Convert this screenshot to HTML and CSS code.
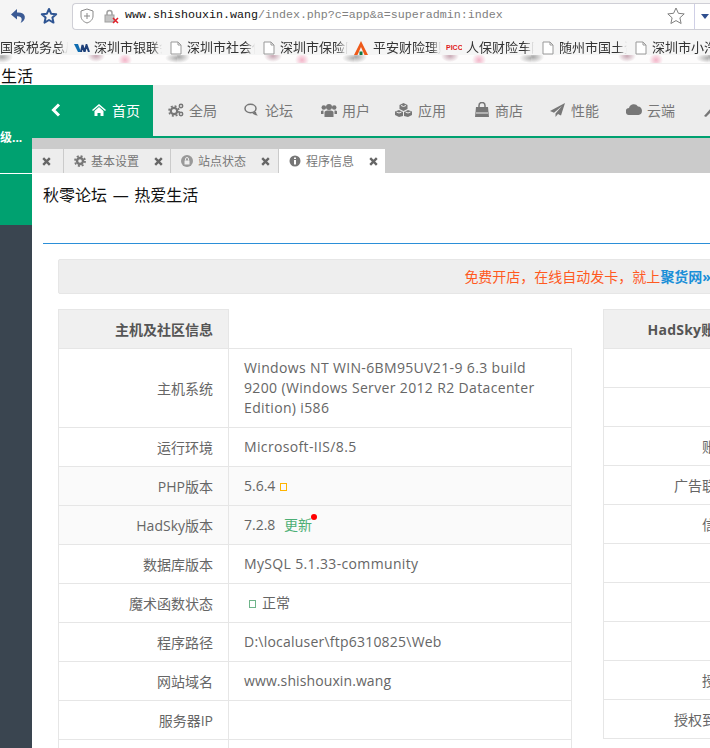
FILE: index.html
```html
<!DOCTYPE html>
<html lang="zh">
<head>
<meta charset="utf-8">
<title>HadSky</title>
<link rel="stylesheet" href="styles.css">
</head>
<body>
<div class="chrome">
  <div class="toolbar">
    <svg class="tb-icon back" viewBox="0 0 16 16" width="16" height="16"><path d="M7 1 1 6.500 7 11.500V8.200c2.700-.2 4.300.8 4.600 2.600.2 1.300-.2 2.800-1.100 4.200 3-1.500 4.700-3.800 4.300-6.600C14.300 5.300 11.300 4.200 7 4.500Z" fill="#3b5a94"/></svg>
    <svg class="tb-icon star" viewBox="0 0 18 18" width="18" height="18"><path d="M9 2l2.100 4.700 5.100.5-3.800 3.400 1.100 5L9 13l-4.500 2.600 1.100-5L1.800 7.200l5.100-.5Z" fill="none" stroke="#2f5593" stroke-width="2" stroke-linejoin="round"/></svg>
    <div class="address">
      <svg class="shield" viewBox="0 0 14 16" width="14" height="16"><path d="M7 1 1 3v5c0 3.500 2.500 5.800 6 7 3.500-1.200 6-3.500 6-7V3Z" fill="#fff" stroke="#8a8a8a"/><path d="M7 5v6M4 8h6" stroke="#8a8a8a"/></svg>
      <svg class="lock" viewBox="0 0 15 15" width="15" height="15"><rect x="1" y="6" width="9" height="7" fill="#c4c4c4" stroke="#a0a0a0"/><path d="M3 6V4a2.500 2.500 0 0 1 5 0v2" fill="none" stroke="#a0a0a0" stroke-width="1.500"/><path d="M9 9l5 5M14 9l-5 5" stroke="#e0202a" stroke-width="1.500"/></svg>
      <div class="url"><span class="url-host">www.shishouxin.wang</span>/index.php?c=app&amp;a=superadmin:index</div>
      <svg class="url-star" viewBox="0 0 20 20" width="20" height="20"><path d="M10 2l2.400 5.300 5.800.6-4.300 3.900 1.200 5.700L10 14.600l-5.100 2.900 1.200-5.700L1.800 7.900l5.800-.6Z" fill="#fff" stroke="#808080" stroke-linejoin="round"/></svg>
      <div class="url-drop"><i class="caret"></i></div>
    </div>
  </div>
  <div class="bookmarks">
    <span class="bm bm-1"><span class="bm-text">国家税务总局</span></span>
    <span class="bm bm-2"><svg class="bm-ic wide" viewBox="0 0 16 8" width="16" height="8"><path d="M0 0h4l3 8H4Z" fill="#0f6cb0"/><path d="M7 8l1.500-7 2 7 2-7L15 8" fill="none" stroke="#1d3f78" stroke-width="2"/></svg><span class="bm-text">深圳市银联会</span></span>
    <span class="bm bm-3"><svg class="bm-ic" viewBox="0 0 12 14" width="12" height="14"><path d="M1 1h7l3 3v9H1Z" fill="#fff" stroke="#999"/><path d="M8 1v3h3" fill="none" stroke="#999"/></svg><span class="bm-text">深圳市社会保</span></span>
    <span class="bm bm-4"><svg class="bm-ic" viewBox="0 0 12 14" width="12" height="14"><path d="M1 1h7l3 3v9H1Z" fill="#fff" stroke="#999"/><path d="M8 1v3h3" fill="none" stroke="#999"/></svg><span class="bm-text">深圳市保险同</span></span>
    <span class="bm bm-5"><svg class="bm-ic logo" viewBox="0 0 14 14" width="14" height="14"><path d="M7 0 0 14h3.500L7 6l3.500 8H14Z" fill="#ee5a1a"/><rect x="5.500" y="10.500" width="3" height="3.500" fill="#0f7a45"/></svg><span class="bm-text">平安财险理赔</span></span>
    <span class="bm bm-6"><span class="picc">PICC</span><span class="bm-text">人保财险车险</span></span>
    <span class="bm bm-7"><svg class="bm-ic" viewBox="0 0 12 14" width="12" height="14"><path d="M1 1h7l3 3v9H1Z" fill="#fff" stroke="#999"/><path d="M8 1v3h3" fill="none" stroke="#999"/></svg><span class="bm-text">随州市国土资</span></span>
    <span class="bm bm-8"><svg class="bm-ic" viewBox="0 0 12 14" width="12" height="14"><path d="M1 1h7l3 3v9H1Z" fill="#fff" stroke="#999"/><path d="M8 1v3h3" fill="none" stroke="#999"/></svg><span class="bm-text">深圳市小汽车</span></span>
  </div>
  <div class="floral"></div>
</div>
<div class="slogan">生活</div>
<div class="app">
  <aside class="side">
    <div class="side-green">
      <div class="side-top"><span class="side-label">级...</span></div>
    </div>
  </aside>
  <main class="main">
    <nav class="nav">
      <div class="nav-back"><svg viewBox="0 0 10 14" width="10" height="14"><path d="M8 1.500 2.500 7 8 12.500" fill="none" stroke="#fff" stroke-width="3"/></svg></div>
      <a class="nav-item active"><svg viewBox="0 0 14 12" width="14" height="12"><path d="M7 0 0 6l1 1 6-5 6 5 1-1ZM2.500 7v5h3V9h3v3h3V7L7 3Z" fill="#fff"/></svg>首页</a>
      <a class="nav-item i-2"><svg viewBox="0 0 16 14" width="16" height="14"><circle cx="6" cy="8" r="3.200" fill="none" stroke="#777" stroke-width="2.200"/><circle cx="6" cy="8" r="5" fill="none" stroke="#777" stroke-width="1.600" stroke-dasharray="2 1.930"/><circle cx="13" cy="3" r="1.700" fill="none" stroke="#777" stroke-width="1.500"/><circle cx="13" cy="11" r="1.700" fill="none" stroke="#777" stroke-width="1.500"/></svg>全局</a>
      <a class="nav-item i-3"><svg viewBox="0 0 15 13" width="15" height="13"><ellipse cx="6.500" cy="5.500" rx="5.500" ry="4.200" fill="none" stroke="#777" stroke-width="1.500"/><path d="M8 9.500c1 1.800 3 2.800 6 3-1.200-.9-1.800-2-2-3.800Z" fill="#777"/></svg>论坛</a>
      <a class="nav-item i-4"><svg viewBox="0 0 16 14" width="16" height="14"><circle cx="8" cy="4" r="3" fill="#777"/><circle cx="2.800" cy="4.500" r="2.300" fill="#777"/><circle cx="13.200" cy="4.500" r="2.300" fill="#777"/><path d="M3.500 14V9.500C3.500 8 5 7.500 8 7.500s4.500.5 4.500 2V14ZM0 11V8.500C0 7.800 1 7.500 2.500 7.500V11ZM16 11V8.500c0-.7-1-1-2.500-1V11Z" fill="#777"/></svg>用户</a>
      <a class="nav-item i-5"><svg viewBox="0 0 17 14" width="17" height="14"><path d="M8.500 0 12.500 2V6L8.500 8 4.500 6V2ZM4 7l4 2v4l-4 1-4-2V8.500ZM13 7l4 1.500V12l-4 2-4-1V9Z" fill="#777"/><path d="M6 2.500l2.500 1 2.500-1M1.500 9 4 10l2.500-1M10.500 9 13 10l2.500-1" stroke="#eee" fill="none"/></svg>应用</a>
      <a class="nav-item i-6"><svg viewBox="0 0 14 15" width="14" height="15"><path d="M1 5h12l1 10H0Z" fill="#777"/><path d="M4 7V3.500a3 3 0 0 1 6 0V7" fill="none" stroke="#777" stroke-width="1.500"/><path d="M1 11h12" stroke="#eee"/></svg>商店</a>
      <a class="nav-item i-7"><svg viewBox="0 0 15 14" width="15" height="14"><path d="M15 0 0 8l4 1.800L12 3 5.500 10.500V14l2.500-3 3 1.500Z" fill="#777"/></svg>性能</a>
      <a class="nav-item i-8"><svg viewBox="0 0 16 11" width="16" height="11"><path d="M3.500 11a3.500 3.500 0 0 1-.5-7A5 5 0 0 1 12 2.500 4.300 4.300 0 0 1 12.500 11Z" fill="#777"/></svg>云端</a>
      <a class="nav-item i-9"><svg viewBox="0 0 14 14" width="14" height="14"><path d="M1 13 8 5l2 2-7 7Z" fill="#777"/></svg>工具</a>
    </nav>
    <div class="tabs">
      <div class="tab tab-x"><svg class="x" viewBox="0 0 9 9" width="9" height="9"><path d="M1.200 1.200l6.600 6.600M7.800 1.200 1.200 7.800" stroke="#666" stroke-width="2.400"/></svg></div>
      <div class="tab tab-a"><svg viewBox="0 0 12 12" width="12" height="12"><circle cx="6" cy="6" r="3" fill="none" stroke="#777" stroke-width="2.400"/><circle cx="6" cy="6" r="5" fill="none" stroke="#777" stroke-width="1.800" stroke-dasharray="2 1.930"/></svg><span>基本设置</span><svg class="x" viewBox="0 0 9 9" width="9" height="9"><path d="M1.200 1.200l6.600 6.600M7.800 1.200 1.200 7.800" stroke="#666" stroke-width="2.400"/></svg></div>
      <div class="tab tab-b"><svg viewBox="0 0 12 12" width="12" height="12"><circle cx="6" cy="6" r="6" fill="#999"/><rect x="3.500" y="5.500" width="5" height="4" fill="#eee"/><path d="M4.500 5.500V4a1.500 1.500 0 0 1 3 0v1.500" fill="none" stroke="#eee"/></svg><span>站点状态</span><svg class="x" viewBox="0 0 9 9" width="9" height="9"><path d="M1.200 1.200l6.600 6.600M7.800 1.200 1.200 7.800" stroke="#666" stroke-width="2.400"/></svg></div>
      <div class="tab current"><svg viewBox="0 0 12 12" width="12" height="12"><circle cx="6" cy="6" r="5.500" fill="#777"/><rect x="5" y="5" width="2" height="4.500" fill="#fff"/><rect x="5" y="2.500" width="2" height="1.500" fill="#fff"/></svg><span>程序信息</span><svg class="x" viewBox="0 0 9 9" width="9" height="9"><path d="M1.200 1.200l6.600 6.600M7.800 1.200 1.200 7.800" stroke="#666" stroke-width="2.400"/></svg></div>
    </div>
    <div class="content">
      <h1 class="page-title">秋零论坛 — 热爱生活</h1>
      <div class="rule"></div>
      <div class="panel">
        <div class="notice"><span class="n-red">免费开店，在线自动发卡，就上</span><span class="n-blue">聚货网»</span></div>
        <div class="columns">
          <div class="col-left">
            <table class="info">
              <tr><th class="label head">主机及社区信息</th><td class="blank"></td></tr>
              <tr class="r-tall"><th class="label">主机系统</th><td class="val wide">Windows NT WIN-6BM95UV21-9 6.3 build 9200 (Windows Server 2012 R2 Datacenter Edition) i586</td></tr>
              <tr><th class="label">运行环境</th><td class="val wide">Microsoft-IIS/8.5</td></tr>
              <tr class="shade"><th class="label">PHP版本</th><td class="val">5.6.4 <span class="box orange"></span></td></tr>
              <tr class="shade"><th class="label">HadSky版本</th><td class="val">7.2.8 <a class="update">更新<b class="dot"></b></a></td></tr>
              <tr><th class="label">数据库版本</th><td class="val wide">MySQL 5.1.33-community</td></tr>
              <tr><th class="label">魔术函数状态</th><td class="val"><span class="box green"></span>正常</td></tr>
              <tr><th class="label">程序路径</th><td class="val mid">D:\localuser\ftp6310825\Web</td></tr>
              <tr><th class="label">网站域名</th><td class="val slight">www.shishouxin.wang</td></tr>
              <tr><th class="label">服务器IP</th><td class="val"></td></tr>
              <tr><th class="label">&nbsp;</th><td class="val"></td></tr>
            </table>
          </div>
          <div class="col-right">
            <table class="info info-right">
              <tr><th class="label head">HadSky账号信息</th></tr>
              <tr><th class="label">&nbsp;</th></tr>
              <tr><th class="label">&nbsp;</th></tr>
              <tr><th class="label">账号余额</th></tr>
              <tr><th class="label">广告联盟余额</th></tr>
              <tr><th class="label">信用等级</th></tr>
              <tr><th class="label">&nbsp;</th></tr>
              <tr><th class="label">&nbsp;</th></tr>
              <tr><th class="label">&nbsp;</th></tr>
              <tr><th class="label">授权类型</th></tr>
              <tr><th class="label">授权到期时间</th></tr>
            </table>
          </div>
        </div>
      </div>
    </div>
  </main>
</div>
</body>
</html>
```
FILE: styles.css
```css
* { box-sizing: border-box; }
html, body { margin: 0; padding: 0; height: 748px; overflow: hidden; background: #fff; }
body { width: 710px; font-family: "Open Sans", "Noto Sans CJK SC", sans-serif; color: #555; }

.chrome { height: 63px; background: #f5f5f5; overflow: hidden; }
.toolbar { height: 32px; display: flex; align-items: center; padding: 0 0 0 10px; }
.tb-icon { flex: none; }
.star { margin-left: 14px; }
.address { margin-left: 14px; flex: none; width: 640px; height: 27px; background: #fff; border: 1px solid #cfcfd6; border-right: 0; border-radius: 4px 0 0 4px; display: flex; align-items: center; padding-left: 7px; }
.lock { margin-left: 10px; flex: none; }
.shield { flex: none; }
.url { margin-left: 6px; width: 530px; flex: none; font: 11.67px/1 "Liberation Mono", monospace; color: #808080; white-space: nowrap; }
.url-host { color: #111; }
.url-star { margin-left: 11px; flex: none; }
.url-drop { margin-left: 8px; flex: none; width: 20px; height: 25px; border-left: 1px solid #cfcfe6; display: flex; align-items: center; padding-left: 6px; }
.caret { width: 0; height: 0; border: 4px solid transparent; border-top: 5px solid #2f4f8f; margin-top: 5px; }

.bookmarks { height: 23px; padding-top: 8px; display: flex; font-size: 13px; line-height: 15px; color: #333; white-space: nowrap; }
.bm { display: flex; align-items: center; flex: none; }
.bm-text { width: 68px; display: block; overflow: hidden; -webkit-mask-image: linear-gradient(90deg, #000 58px, transparent 68px); mask-image: linear-gradient(90deg, #000 58px, transparent 68px); }
.bm-ic { margin-right: 5px; flex: none; }
.bm-ic.wide { margin-right: 4px; }
.bm-1 { width: 74px; }
.bm-2 { width: 96px; }
.bm-3 { width: 93px; }
.bm-4 { width: 91px; }
.bm-5 { width: 92px; }
.bm-6 { width: 96px; }
.bm-7 { width: 93px; }
.picc { font: bold 7px/1 "Liberation Sans", sans-serif; color: #e0201c; margin-right: 4px; width: 16px; flex: none; overflow: hidden; }
.floral {
  height: 8px;
  background-color: #fdfcfc;
  background-image:
    radial-gradient(ellipse 11px 6px at 2px 2px, #a8a8a8, transparent),
    radial-gradient(ellipse 9px 6px at 96px 1px, #c8a8b4, transparent),
    radial-gradient(ellipse 7px 7px at 125px 5px, #f2b4c8, transparent),
    radial-gradient(ellipse 13px 5px at 178px 3px, #a8a8a8, transparent);
  background-size: 177px 8px;
  background-repeat: repeat-x;
}

.slogan { height: 22px; background: #fff; font-size: 16px; line-height: 24px; color: #111; padding-left: 1px; border-top: 1px solid #eee; }

.app { display: flex; height: 663px; }
.side { width: 32px; flex: none; background: #3a4550; }
.side-green { height: 140px; background: #00a170; color: #fff; font-size: 12px; font-weight: 700; overflow: hidden; }
.side-top { height: 89px; border-bottom: 1px solid #fff; padding-top: 44px; line-height: 18px; white-space: nowrap; }

.main { flex: 1; min-width: 0; overflow: hidden; }
.nav { height: 53px; background: #ededed; border-bottom: 2px solid #00a170; display: flex; font-size: 14px; color: #777; white-space: nowrap; }
.nav-back { width: 47px; flex: none; background: #00a170; display: flex; align-items: center; justify-content: center; padding-bottom: 1px; }
.nav-item { flex: none; display: flex; align-items: center; gap: 6px; padding: 0 0 2px 14px; height: 51px; width: 76px; color: #777; }
.nav-item.active { background: #00a170; color: #fff; width: 74px; padding: 0 0 2px 13px; }
.i-2 { padding-left: 15px; width: 77px; gap: 5px; }
.i-3 { width: 77px; }
.i-4 { width: 75px; gap: 5px; }
.i-5 { width: 78px; padding-left: 13px; }
.i-6 { width: 76px; padding-left: 15px; }
.i-7 { width: 77px; }
.i-8 { width: 76px; padding-left: 13px; gap: 5px; }

.tabs { height: 35px; background: #cbcbcb; padding-top: 11px; display: flex; font-size: 12px; color: #777; }
.tab { height: 24px; flex: none; display: flex; align-items: center; background: #ededed; border-right: 1px solid #cbcbcb; padding-left: 10px; white-space: nowrap; }
.tab span { margin-left: 5px; }
.tab .x { margin-left: 15px; }
.tab-x { width: 32px; }
.tab.tab-x .x { margin-left: 0; }
.tab-a { width: 107px; }
.tab-b { width: 108px; }
.tab.current { background: #fff; width: 106px; border-right: 0; }

.content { padding: 0 0 0 11px; }
.page-title { margin: 0; font-size: 16px; font-weight: 400; color: #111; line-height: 22px; padding-top: 11px; height: 70px; word-spacing: 1.5px; }
.rule { height: 1px; background: #2b8fd8; width: 100%; }
.panel { padding: 15px 0 0 15px; width: 700px; }
.notice { height: 35px; background: #eee; border: 1px solid #e6e6e6; border-radius: 2px; font-size: 14px; line-height: 33px; text-align: right; white-space: nowrap; overflow: hidden; width: 654px; }
.n-red { color: #ff5a1f; }
.n-blue { color: #1a8fd8; font-weight: 700; }

.columns { display: flex; gap: 31px; margin-top: 15px; width: 900px; }
.col-left { width: 514px; flex: none; }
.col-right { width: 170px; flex: none; }
.info { border-collapse: collapse; width: 100%; table-layout: fixed; font-size: 14px; }
.info th, .info td { border: 1px solid #e6e6e6; height: 39px; padding: 0; font-weight: 400; }
.label { width: 170px; text-align: right; padding-right: 15px !important; color: #666; font-size: 14px; white-space: nowrap; }
.info .label.head { background: #f0f0f0; font-weight: 700; color: #555; }
.info-right .label.head { letter-spacing: .2px; }
.info td.blank { border: 0; border-bottom: 1px solid #e6e6e6; }
.val { padding: 0 15px !important; color: #666; line-height: 20px; }
.val.wide { letter-spacing: .35px; }
.val.mid { letter-spacing: .22px; }
.val.slight { letter-spacing: .1px; }
.info .r-tall th, .info .r-tall td { height: 79px; }
.shade th, .shade td { background: #fafafa; }
.box { display: inline-block; width: 7px; height: 8px; border: 1px solid #aaa; }
.box.orange { border-color: #ffb400; margin-left: 1px; }
.box.green { border-color: #6fb48a; margin: 0 6px 0 5px; }
.update { color: #4caf75; position: relative; margin-left: 5px; }
.dot { position: absolute; right: -5px; top: -1px; width: 6px; height: 6px; border-radius: 50%; background: #f00; }
```
